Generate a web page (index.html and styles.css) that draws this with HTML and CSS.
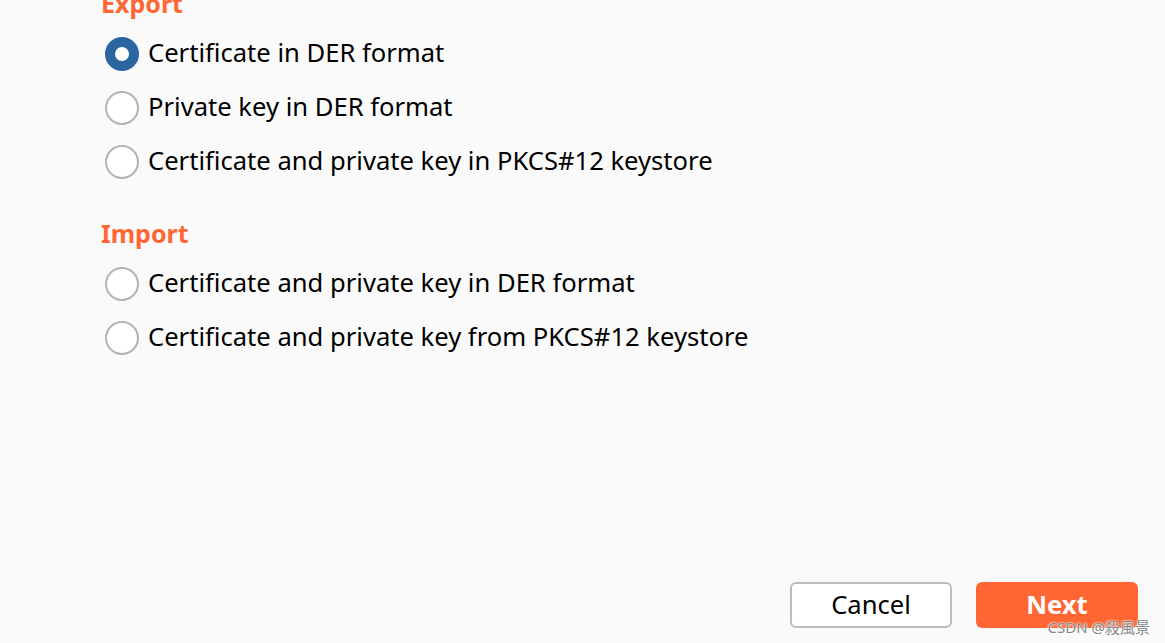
FILE: index.html
```html
<!DOCTYPE html>
<html>
<head>
<meta charset="utf-8">
<link rel="stylesheet" href="styles.css">
</head>
<body>
<div class="page">
  <div class="content">
    <section class="group group-first">
      <h2 class="group-title">Export</h2>
      <label class="row"><span class="radio checked"></span><span class="label">Certificate in DER format</span></label>
      <label class="row"><span class="radio"></span><span class="label">Private key in DER format</span></label>
      <label class="row"><span class="radio"></span><span class="label">Certificate and private key in PKCS#12 keystore</span></label>
    </section>
    <section class="group">
      <h2 class="group-title">Import</h2>
      <label class="row"><span class="radio"></span><span class="label">Certificate and private key in DER format</span></label>
      <label class="row"><span class="radio"></span><span class="label">Certificate and private key from PKCS#12 keystore</span></label>
    </section>
  </div>
  <div class="footer">
    <button class="btn btn-cancel">Cancel</button>
    <button class="btn btn-next">Next</button>
  </div>
  <div class="watermark">CSDN @殺風景</div>
</div>
</body>
</html>
```
FILE: styles.css
```css
html, body {
  margin: 0;
  padding: 0;
  background: #fafafa;
}
body {
  font-family: "Noto Sans", "Open Sans", "Noto Sans CJK SC", sans-serif;
  color: #000;
  overflow: hidden;
}
.page {
  position: relative;
  width: 1165px;
  height: 643px;
  display: flex;
  flex-direction: column;
  overflow: hidden;
}
.content {
  padding-left: 101px;
}
.group-first {
  margin-top: -21px;
}
.group + .group {
  margin-top: 20px;
}
.group-title {
  margin: 0;
  height: 48px;
  line-height: 48px;
  font-size: 25px;
  font-weight: 700;
  color: #ff6633;
}
.row {
  display: flex;
  align-items: center;
  height: 54px;
  padding-left: 4px;
}
.radio {
  box-sizing: border-box;
  width: 34px;
  height: 34px;
  border-radius: 50%;
  border: 2px solid #b3b3b3;
  background: #fff;
  flex: none;
}
.radio.checked {
  border: 10px solid #2b66a0;
  background: #fff;
}
.label {
  margin-left: 9px;
  font-size: 25.6px;
  line-height: 34px;
  position: relative;
  top: -1px;
}
.footer {
  margin-top: auto;
  display: flex;
  justify-content: flex-end;
  gap: 24px;
  padding: 0 27px 15px 0;
}
.btn {
  box-sizing: border-box;
  width: 162px;
  height: 46px;
  border-radius: 6px;
  font-family: inherit;
  font-size: 25.6px;
  line-height: 1;
  padding: 0;
  cursor: pointer;
}
.btn-cancel {
  background: #fff;
  border: 2px solid #bcbcbc;
  color: #000;
}
.btn-next {
  background: #ff6633;
  border: none;
  color: #fff;
  font-weight: 700;
}
.watermark {
  position: absolute;
  right: 15px;
  bottom: 6px;
  font-size: 15px;
  color: #888;
  text-shadow: 0 0 2px #fff, 0 0 2px #fff;
}
```
